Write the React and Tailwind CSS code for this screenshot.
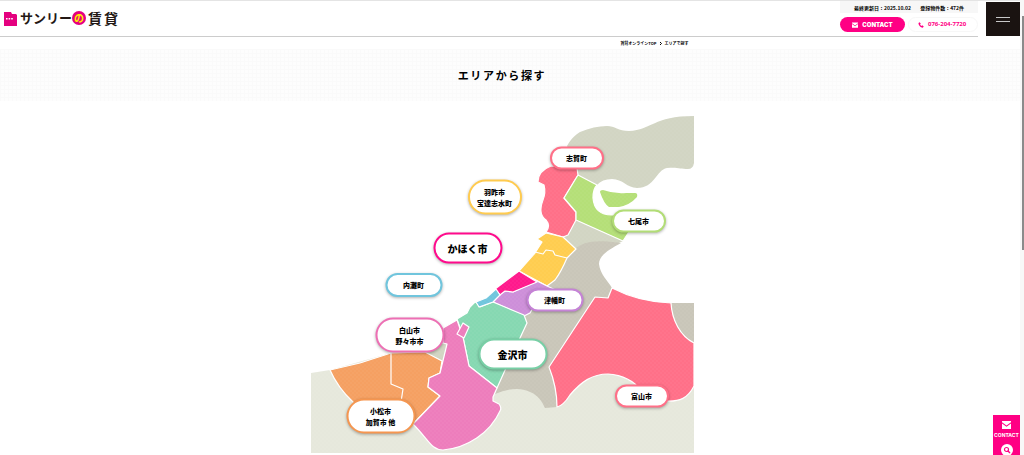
import React from 'react';

const areas = [
  { lines: ['志賀町'], x: 266, y: 43, style: 'w-[54px] h-[23px] text-[7px] border-[#ff7088]' },
  { lines: ['羽咋市', '宝達志水町'], x: 184, y: 82, style: 'w-[54px] h-[35px] text-[7px] border-[#ffcb4f]' },
  { lines: ['七尾市'], x: 328, y: 106, style: 'w-[54px] h-[23px] text-[7px] border-[#b2dd76]' },
  { lines: ['かほく市'], x: 157, y: 133, style: 'w-[69px] h-[31px] text-[10px] border-[#ff0a8c]' },
  { lines: ['内灘町'], x: 103, y: 170, style: 'w-[57px] h-[24px] text-[7px] border-[#70c5dd]' },
  { lines: ['津幡町'], x: 244, y: 185, style: 'w-[57px] h-[23px] text-[7px] border-[#c583d6]' },
  { lines: ['白山市', '野々市市'], x: 99, y: 220, style: 'w-[69px] h-[35px] text-[7px] border-[#ed6fb4]' },
  { lines: ['金沢市'], x: 202, y: 239, style: 'w-[69px] h-[31px] text-[10px] border-[#78cfa6]' },
  { lines: ['小松市', '加賀市 他'], x: 70, y: 301, style: 'w-[69px] h-[35px] text-[7px] border-[#f59650]' },
  { lines: ['富山市'], x: 331, y: 281, style: 'w-[54px] h-[23px] text-[7px] border-[#ff7088]' },
];

const MailIcon = ({ className }) => (
  <svg viewBox="0 0 16 14" className={className} fill="currentColor" aria-hidden="true">
    <path d="M0 0h16v2.2L8 8 0 2.2z" />
    <path d="M0 4.4 8 10l8-5.6V14H0z" />
  </svg>
);

const PhoneIcon = ({ className }) => (
  <svg viewBox="0 0 24 24" className={className} fill="currentColor" aria-hidden="true">
    <path d="M7 1 2 4c-1 8 8 18 17 19l4-5-6-5-3 3c-3-1-5-4-6-6l3-3z" />
  </svg>
);

const SearchIcon = ({ className }) => (
  <svg viewBox="0 0 24 24" className={className} aria-hidden="true">
    <circle cx="12" cy="12" r="12" fill="#fff" />
    <circle cx="11" cy="11" r="4" fill="none" stroke="#ff0084" strokeWidth="2.4" />
    <path d="m14 14 4 4" stroke="#ff0084" strokeWidth="3" />
  </svg>
);

const Logo = () => (
  <a href="#" className="flex items-center text-[#231815] font-bold leading-4">
    <svg viewBox="0 0 14 15" className="w-[14px] h-[15px] mr-[2px]" aria-hidden="true">
      <path d="M0 1h7l1 2h4l1 1v11H0z" fill="#e4007f" />
      <path d="M2 7h1.6v1.4H2zM4.6 7h1.6v1.4H4.6zM7.2 7h1.6v1.4H7.2z" fill="#fff" />
    </svg>
    <span className="text-[13px]">サンリー</span>
    <span className="size-[14px] rounded-full bg-[#e4007f] text-[#fff000] text-[10px] leading-[13px] text-center">の</span>
    <span className="flex gap-[2px] ml-[2px] text-[14px]">
      <span>賃</span>
      <span>貸</span>
    </span>
  </a>
);

const Header = () => (
  <header className="flex border-t border-[#e4e4e4]">
    <div className="flex flex-1 justify-between h-9 border-b border-[#cccccc]">
      <div className="flex items-center pl-1 pb-px">
        <Logo />
      </div>
      <div className="w-[138px]">
        <div className="flex justify-between h-3 px-[14px] bg-[#f7f7f7] text-[5px] leading-[13px] whitespace-nowrap">
          <span>最終更新日：2025.10.02</span>
          <span>登録物件数：472件</span>
        </div>
        <div className="flex gap-[3px] mt-1 text-[6px] leading-[15px] font-black font-['Inter',sans-serif]">
          <a href="#contact" className="flex items-center justify-center gap-1 w-[65px] h-[15px] rounded-full bg-[#ff0084] text-white">
            <MailIcon className="w-[6px] h-[6px]" />
            CONTACT
          </a>
          <a href="tel:076-204-7720" className="flex items-center gap-1 w-[70px] h-[15px] pl-[9px] rounded-full border border-[#f7f7f7] text-[#ff0084] font-bold font-['Open_Sans',sans-serif]">
            <PhoneIcon className="w-[6px] h-[6px]" />
            076-204-7720
          </a>
        </div>
      </div>
    </div>
    <button type="button" aria-label="メニュー" className="flex flex-col items-center justify-center gap-[3px] w-[34px] h-[34px] mt-px ml-2 bg-[#1a1311]">
      <span className="w-[14px] h-px bg-[#c8c8c8]" />
      <span className="w-[14px] h-px bg-[#c8c8c8]" />
    </button>
  </header>
);

const AreaMap = () => (
  <svg viewBox="311 115 383 338" className="block w-full" aria-hidden="true">
    <defs>
      <pattern id="dots" width="4" height="4" patternUnits="userSpaceOnUse">
        <circle cx="1" cy="1" r=".8" fill="#fff" />
        <circle cx="3" cy="3" r=".8" fill="#fff" />
      </pattern>
    </defs>
    <path fill="#e6e8dc" d="M311 373 330 370 391 353 440 380 550 372 694 372V453H311Z" />
    <path fill="#d2d5c3" d="M567 146C571 139 575 135 580 132Q594 126 607 126C615 126 618 131 629 131C652 130 653 116 694 116V163Q693 169 688 169C680 169 678 167 667 168C656 170 655 188 637 188C627 188 623 179 612 179Q602 179 597 185L578 175 577 168Z" />
    <path fill="#d2d5c3" d="M576 220 623 241 600 252 575 260 563 237Z" />
    <path fill="#d2d5c3" d="M420 350 444 343 448 344 443 361Z" />
    <path fill="#c9c6b9" d="M575 249C583 242 594 239 621 243C608 250 599 256 599 264C600 274 608 281 612 288L608 298 595 297 549 367Q556 387 557 407L545 408C542 401 536 390 517 389Q506 389 495 394L497 387 500 320 545 280Z" />
    <path fill="#c9c6b9" d="M671 303H694V343C680 335 672 320 671 303Z" />
    <g stroke="#fff" strokeWidth="1.2" strokeLinejoin="round">
      <path fill="#ff7088" d="M551 166 577 168 578 175 564 198 576 212V220L568 235 563 237 546 232Q551 226 546 220C540 216 540 208 543 200Q546 193 544 185L538 182Q538 171 551 166Z" />
      <path fill="#b5df78" d="M578 175 597 185Q593 189 593 198C594 210 601 215 612 215H640L623 241 576 220V212L564 198Z" />
      <path fill="#b5df78" stroke="none" d="M600 192Q600 190 603 190Q614 194 626 193L635 193Q638 193 637 197Q630 205 619 207H609Q604 204 600 192Z" />
      <path fill="#ffcd50" d="M546 233 563 237 576 249 567 258Q561 272 555 280L547 286 519 271 535 253 542 242 537 239Z" />
      <path fill="none" d="m535 252 8 2 3-4 7 1 2 4 12 3" />
      <path fill="#cd8fd9" d="M537 281 547 286 560 292 555 308 533 308 530 313 524 316 493 302 500 294 505 291 513 292Z" />
      <path fill="#ff1a8c" d="M519 271 537 282 513 292 505 291 500 295 495 289Z" />
      <path fill="#86d8b2" d="M475 302 477 303 480 307 493 302 524 315 527 323 506 368 497 388 469 366 463 337 457 319 467 313 470 307Z" />
      <path fill="#70c5dd" d="M496 289 500 295 493 302 479 307 476 302 486 298Z" />
      <path fill="#f5a062" d="M330 370 360 363 391 353 425 352 442 361 440 373 429 378 428 387 440 396 413 424 375 425 353 402Q338 388 330 370Z" />
      <path fill="none" d="M391 353V384L403 389 401 402" />
      <path fill="#ed7dbc" d="M457 320 463 337 469 366 497 388 493 397V401L499 404Q502 408 500 411C490 433 467 448 443 450C431 450 429 440 413 424L440 396 428 387 429 378 440 373 447 344 443 343V328Z" />
      <path fill="#ed7dbc" d="M463 323 469 327 464 338 457 334Z" />
      <path fill="#ff7088" d="M612 288Q639 302 671 303C672 320 680 336 694 343V386C688 398 680 402 665 401H650L635 384C624 375 611 374 608 374C592 374 581 382 570 395Q563 406 557 407 557 387 549 367L595 297 608 298Z" />
    </g>
    <rect x="311" y="115" width="383" height="338" fill="url(#dots)" opacity=".07" />
  </svg>
);

const AreaLink = ({ area }) => (
  <a
    href="#area"
    className={`absolute -translate-x-1/2 -translate-y-1/2 flex flex-col items-center justify-center rounded-full border-2 bg-white font-black leading-[11px] whitespace-nowrap shadow-[0_1px_3px_rgba(0,0,0,0.3)] ${area.style}`}
    style={{ left: `${(area.x / 383) * 100}%`, top: `${(area.y / 338) * 100}%` }}
  >
    {area.lines.map((line) => (
      <span key={line}>{line}</span>
    ))}
  </a>
);

const SideMenu = () => (
  <div className="fixed right-1 bottom-0 flex flex-col items-center w-[27px] h-10 pt-[6px] overflow-hidden bg-[#ff0084] text-white">
    <a href="#contact" className="flex flex-col items-center text-[5px] leading-[10px] font-bold font-['Inter',sans-serif]">
      <MailIcon className="w-[9px] h-2 mb-[1px]" />
      CONTACT
    </a>
    <a href="#search" aria-label="検索" className="mt-1">
      <SearchIcon className="size-3" />
    </a>
  </div>
);

const App = () => {
  return (
    <div className="h-screen overflow-hidden bg-white pr-1 text-black font-bold font-['Noto_Sans_CJK_JP',sans-serif]">
      <Header />
      <nav className="pr-4">
        <div className="flex justify-end items-center gap-[3px] max-w-[383px] h-3 mx-auto pr-[5px] text-[4px] leading-3">
          <a href="#">賃貸オンラインTOP</a>
          <svg viewBox="0 0 4 6" className="w-[2px] h-[3px]" fill="none" stroke="currentColor" strokeWidth="2" aria-hidden="true">
            <path d="m0 0 3 3-3 3" />
          </svg>
          <span>エリアで探す</span>
        </div>
      </nav>
      <div className="pr-4 py-4 bg-[#fdfdfd] bg-[linear-gradient(#fafafa_1px,transparent_1px),linear-gradient(90deg,#fafafa_1px,transparent_1px)] bg-[size:4px_4px]">
        <h1 className="text-center text-[11px] leading-5 tracking-[0.15em]">エリアから探す</h1>
      </div>
      <main className="pr-4 pt-[14px]">
        <div className="relative max-w-[383px] mx-auto">
          <AreaMap />
          {areas.map((area) => (
            <AreaLink key={area.lines[0]} area={area} />
          ))}
        </div>
      </main>
      <SideMenu />
      <div className="fixed top-0 right-0 w-1 h-full bg-[#f8f8f8]">
        <div className="w-[2px] h-[234px] mt-4 ml-[2px] bg-[#8b8b8b]" />
      </div>
    </div>
  );
};

export default App;
